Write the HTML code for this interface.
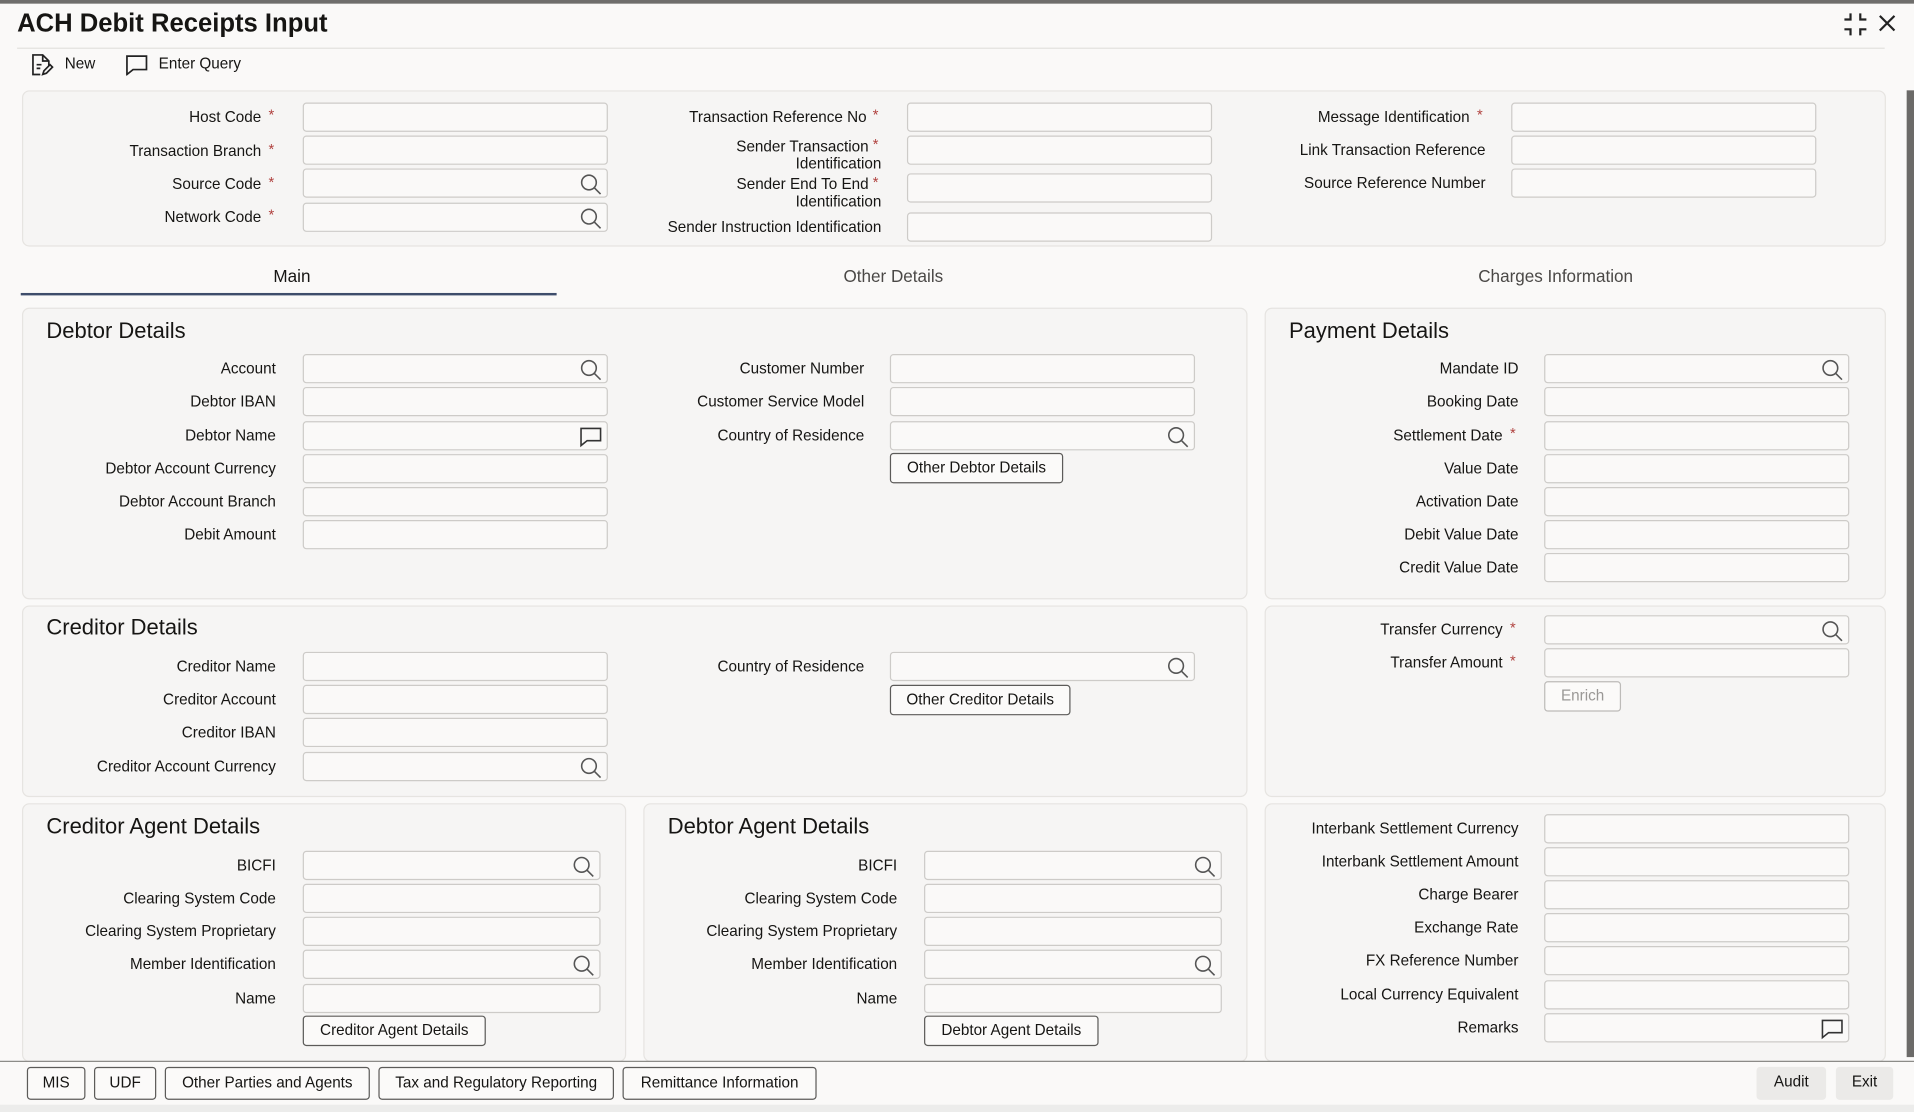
<!DOCTYPE html>
<html><head><meta charset="utf-8">
<style>
html,body{margin:0;padding:0;width:1914px;height:1112px;overflow:hidden;background:#faf9f8;}
#w{position:absolute;left:0;top:0;width:1568px;height:911px;transform:scale(1.22066);transform-origin:0 0;font-family:"Liberation Sans",sans-serif;color:#161513;font-size:12.5px;}
.p{position:absolute;background:#f6f5f4;border:1px solid #e6e4e1;border-radius:6px;}
.l{position:absolute;width:300px;text-align:right;line-height:16px;white-space:nowrap;}
.l2{position:absolute;width:300px;text-align:right;line-height:14px;}
.a{position:absolute;color:#b0413e;font-size:12px;line-height:12px;}
.i{position:absolute;height:24px;border:1px solid #cdcbc8;border-radius:3px;background:#faf9f8;box-sizing:border-box;}
.s{position:absolute;right:4px;top:3px;}
.h{position:absolute;font-size:18px;line-height:22px;}
.b{position:absolute;height:25px;border:1px solid #5c5b59;border-radius:3px;box-sizing:border-box;background:#fbfaf9;text-align:center;line-height:23px;font-size:12.5px;}
.t{position:absolute;font-size:14px;color:#4a4846;line-height:18px;}
</style></head><body><div id="w">
<div style="position:absolute;left:0;top:0;width:1568px;height:3px;background:#6f6e6c"></div>
<div style="position:absolute;left:14px;top:7px;font-size:21px;font-weight:bold;line-height:26px">ACH Debit Receipts Input</div>
<div style="position:absolute;left:14px;top:39px;width:1530px;height:1px;background:#e3e1de"></div>
<svg style="position:absolute;left:1509px;top:9px" width="22" height="22" viewBox="0 0 22 22" fill="none" stroke="#222" stroke-width="1.8"><path d="M7 2v5H2M15 2v5h5M7 20v-5H2M15 20v-5h5"/></svg>
<svg style="position:absolute;left:1539px;top:12px" width="14" height="14" viewBox="0 0 14 14" stroke="#222" stroke-width="1.8"><path d="M1 1l12 12M13 1L1 13"/></svg>
<svg style="position:absolute;left:24px;top:43px" width="20" height="20" viewBox="0 0 20 20" fill="none" stroke="#222" stroke-width="1.4"><path d="M9 18H3V2h8l5 5v4M11 2v5h5M6 10h4M6 13h3M11 18l1-3 5-5 2 2-5 5z"/></svg>
<div style="position:absolute;left:53px;top:44px;line-height:16px">New</div>
<svg style="position:absolute;left:102px;top:44px" width="20" height="18" viewBox="0 0 20 18" fill="none" stroke="#222" stroke-width="1.4"><path d="M2 2h16v11H7l-5 4z"/></svg>
<div style="position:absolute;left:130px;top:44px;line-height:16px">Enter Query</div>

<div class="p" style="left:18px;top:74px;width:1525px;height:126px"></div>
<div class="l" style="left:-86px;top:88px">Host Code</div><span class="a" style="left:220px;top:88px">*</span><div class="i" style="left:248px;top:84px;width:250px"></div>
<div class="l" style="left:-86px;top:116px">Transaction Branch</div><span class="a" style="left:220px;top:116px">*</span><div class="i" style="left:248px;top:111px;width:250px"></div>
<div class="l" style="left:-86px;top:143px">Source Code</div><span class="a" style="left:220px;top:143px">*</span><div class="i" style="left:248px;top:138px;width:250px"><svg class="s" width="18" height="18" viewBox="0 0 18 18" fill="none" stroke="#555" stroke-width="1.3"><circle cx="7.5" cy="7.5" r="6"/><path d="M12 12l5 5"/></svg></div>
<div class="l" style="left:-86px;top:170px">Network Code</div><span class="a" style="left:220px;top:170px">*</span><div class="i" style="left:248px;top:166px;width:250px"><svg class="s" width="18" height="18" viewBox="0 0 18 18" fill="none" stroke="#555" stroke-width="1.3"><circle cx="7.5" cy="7.5" r="6"/><path d="M12 12l5 5"/></svg></div>

<div class="l" style="left:410px;top:88px">Transaction Reference No</div><span class="a" style="left:715px;top:88px">*</span><div class="i" style="left:743px;top:84px;width:250px"></div>
<div class="l2" style="left:422px;top:113px">Sender Transaction&nbsp;&nbsp;&nbsp;<br>Identification</div><span class="a" style="left:715px;top:112px">*</span><div class="i" style="left:743px;top:111px;width:250px"></div>
<div class="l2" style="left:422px;top:144px">Sender End To End&nbsp;&nbsp;&nbsp;<br>Identification</div><span class="a" style="left:715px;top:143px">*</span><div class="i" style="left:743px;top:142px;width:250px"></div>
<div class="l" style="left:422px;top:178px">Sender Instruction Identification</div><div class="i" style="left:743px;top:174px;width:250px"></div>

<div class="l" style="left:904px;top:88px">Message Identification</div><span class="a" style="left:1210px;top:88px">*</span><div class="i" style="left:1238px;top:84px;width:250px"></div>
<div class="l" style="left:917px;top:115px">Link Transaction Reference</div><div class="i" style="left:1238px;top:111px;width:250px"></div>
<div class="l" style="left:917px;top:142px">Source Reference Number</div><div class="i" style="left:1238px;top:138px;width:250px"></div>

<div class="t" style="left:224px;top:217px;color:#161513">Main</div>
<div style="position:absolute;left:17px;top:240px;width:439px;height:2px;background:#3e4d6b"></div>
<div class="t" style="left:691px;top:217px">Other Details</div>
<div class="t" style="left:1211px;top:217px">Charges Information</div>

<div class="p" style="left:18px;top:252px;width:1002px;height:237px"></div>
<div class="h" style="left:38px;top:260px">Debtor Details</div>
<div class="l" style="left:-74px;top:294px">Account</div><div class="i" style="left:248px;top:290px;width:250px"><svg class="s" width="18" height="18" viewBox="0 0 18 18" fill="none" stroke="#555" stroke-width="1.3"><circle cx="7.5" cy="7.5" r="6"/><path d="M12 12l5 5"/></svg></div>
<div class="l" style="left:-74px;top:321px">Debtor IBAN</div><div class="i" style="left:248px;top:317px;width:250px"></div>
<div class="l" style="left:-74px;top:349px">Debtor Name</div><div class="i" style="left:248px;top:345px;width:250px"><svg class="s" width="18" height="18" viewBox="0 0 18 18" fill="none" stroke="#333" stroke-width="1.3"><path d="M1 2h16v10H6l-5 4z"/></svg></div>
<div class="l" style="left:-74px;top:376px">Debtor Account Currency</div><div class="i" style="left:248px;top:372px;width:250px"></div>
<div class="l" style="left:-74px;top:403px">Debtor Account Branch</div><div class="i" style="left:248px;top:399px;width:250px"></div>
<div class="l" style="left:-74px;top:430px">Debit Amount</div><div class="i" style="left:248px;top:426px;width:250px"></div>
<div class="l" style="left:408px;top:294px">Customer Number</div><div class="i" style="left:729px;top:290px;width:250px"></div>
<div class="l" style="left:408px;top:321px">Customer Service Model</div><div class="i" style="left:729px;top:317px;width:250px"></div>
<div class="l" style="left:408px;top:349px">Country of Residence</div><div class="i" style="left:729px;top:345px;width:250px"><svg class="s" width="18" height="18" viewBox="0 0 18 18" fill="none" stroke="#555" stroke-width="1.3"><circle cx="7.5" cy="7.5" r="6"/><path d="M12 12l5 5"/></svg></div>
<div class="b" style="left:729px;top:371px;width:142px">Other Debtor Details</div>

<div class="p" style="left:1036px;top:252px;width:507px;height:237px"></div>
<div class="h" style="left:1056px;top:260px">Payment Details</div>
<div class="l" style="left:944px;top:294px">Mandate ID</div><div class="i" style="left:1265px;top:290px;width:250px"><svg class="s" width="18" height="18" viewBox="0 0 18 18" fill="none" stroke="#555" stroke-width="1.3"><circle cx="7.5" cy="7.5" r="6"/><path d="M12 12l5 5"/></svg></div>
<div class="l" style="left:944px;top:321px">Booking Date</div><div class="i" style="left:1265px;top:317px;width:250px"></div>
<div class="l" style="left:931px;top:349px">Settlement Date</div><span class="a" style="left:1237px;top:349px">*</span><div class="i" style="left:1265px;top:345px;width:250px"></div>
<div class="l" style="left:944px;top:376px">Value Date</div><div class="i" style="left:1265px;top:372px;width:250px"></div>
<div class="l" style="left:944px;top:403px">Activation Date</div><div class="i" style="left:1265px;top:399px;width:250px"></div>
<div class="l" style="left:944px;top:430px">Debit Value Date</div><div class="i" style="left:1265px;top:426px;width:250px"></div>
<div class="l" style="left:944px;top:457px">Credit Value Date</div><div class="i" style="left:1265px;top:453px;width:250px"></div>

<div class="p" style="left:18px;top:496px;width:1002px;height:155px"></div>
<div class="h" style="left:38px;top:503px">Creditor Details</div>
<div class="l" style="left:-74px;top:538px">Creditor Name</div><div class="i" style="left:248px;top:534px;width:250px"></div>
<div class="l" style="left:-74px;top:565px">Creditor Account</div><div class="i" style="left:248px;top:561px;width:250px"></div>
<div class="l" style="left:-74px;top:592px">Creditor IBAN</div><div class="i" style="left:248px;top:588px;width:250px"></div>
<div class="l" style="left:-74px;top:620px">Creditor Account Currency</div><div class="i" style="left:248px;top:616px;width:250px"><svg class="s" width="18" height="18" viewBox="0 0 18 18" fill="none" stroke="#555" stroke-width="1.3"><circle cx="7.5" cy="7.5" r="6"/><path d="M12 12l5 5"/></svg></div>
<div class="l" style="left:408px;top:538px">Country of Residence</div><div class="i" style="left:729px;top:534px;width:250px"><svg class="s" width="18" height="18" viewBox="0 0 18 18" fill="none" stroke="#555" stroke-width="1.3"><circle cx="7.5" cy="7.5" r="6"/><path d="M12 12l5 5"/></svg></div>
<div class="b" style="left:729px;top:561px;width:148px">Other Creditor Details</div>

<div class="p" style="left:1036px;top:496px;width:507px;height:155px"></div>
<div class="l" style="left:931px;top:508px">Transfer Currency</div><span class="a" style="left:1237px;top:508px">*</span><div class="i" style="left:1265px;top:504px;width:250px"><svg class="s" width="18" height="18" viewBox="0 0 18 18" fill="none" stroke="#555" stroke-width="1.3"><circle cx="7.5" cy="7.5" r="6"/><path d="M12 12l5 5"/></svg></div>
<div class="l" style="left:931px;top:535px">Transfer Amount</div><span class="a" style="left:1237px;top:535px">*</span><div class="i" style="left:1265px;top:531px;width:250px"></div>
<div class="b" style="left:1265px;top:558px;width:63px;border-color:#bdbbb8;color:#9a9896">Enrich</div>

<div class="p" style="left:18px;top:658px;width:493px;height:210px"></div>
<div class="h" style="left:38px;top:666px">Creditor Agent Details</div>
<div class="l" style="left:-74px;top:701px">BICFI</div><div class="i" style="left:248px;top:697px;width:244px"><svg class="s" width="18" height="18" viewBox="0 0 18 18" fill="none" stroke="#555" stroke-width="1.3"><circle cx="7.5" cy="7.5" r="6"/><path d="M12 12l5 5"/></svg></div>
<div class="l" style="left:-74px;top:728px">Clearing System Code</div><div class="i" style="left:248px;top:724px;width:244px"></div>
<div class="l" style="left:-74px;top:755px">Clearing System Proprietary</div><div class="i" style="left:248px;top:751px;width:244px"></div>
<div class="l" style="left:-74px;top:782px">Member Identification</div><div class="i" style="left:248px;top:778px;width:244px"><svg class="s" width="18" height="18" viewBox="0 0 18 18" fill="none" stroke="#555" stroke-width="1.3"><circle cx="7.5" cy="7.5" r="6"/><path d="M12 12l5 5"/></svg></div>
<div class="l" style="left:-74px;top:810px">Name</div><div class="i" style="left:248px;top:806px;width:244px"></div>
<div class="b" style="left:248px;top:832px;width:150px">Creditor Agent Details</div>

<div class="p" style="left:527px;top:658px;width:493px;height:210px"></div>
<div class="h" style="left:547px;top:666px">Debtor Agent Details</div>
<div class="l" style="left:435px;top:701px">BICFI</div><div class="i" style="left:757px;top:697px;width:244px"><svg class="s" width="18" height="18" viewBox="0 0 18 18" fill="none" stroke="#555" stroke-width="1.3"><circle cx="7.5" cy="7.5" r="6"/><path d="M12 12l5 5"/></svg></div>
<div class="l" style="left:435px;top:728px">Clearing System Code</div><div class="i" style="left:757px;top:724px;width:244px"></div>
<div class="l" style="left:435px;top:755px">Clearing System Proprietary</div><div class="i" style="left:757px;top:751px;width:244px"></div>
<div class="l" style="left:435px;top:782px">Member Identification</div><div class="i" style="left:757px;top:778px;width:244px"><svg class="s" width="18" height="18" viewBox="0 0 18 18" fill="none" stroke="#555" stroke-width="1.3"><circle cx="7.5" cy="7.5" r="6"/><path d="M12 12l5 5"/></svg></div>
<div class="l" style="left:435px;top:810px">Name</div><div class="i" style="left:757px;top:806px;width:244px"></div>
<div class="b" style="left:757px;top:832px;width:143px">Debtor Agent Details</div>

<div class="p" style="left:1036px;top:658px;width:507px;height:210px"></div>
<div class="l" style="left:944px;top:671px">Interbank Settlement Currency</div><div class="i" style="left:1265px;top:667px;width:250px"></div>
<div class="l" style="left:944px;top:698px">Interbank Settlement Amount</div><div class="i" style="left:1265px;top:694px;width:250px"></div>
<div class="l" style="left:944px;top:725px">Charge Bearer</div><div class="i" style="left:1265px;top:721px;width:250px"></div>
<div class="l" style="left:944px;top:752px">Exchange Rate</div><div class="i" style="left:1265px;top:748px;width:250px"></div>
<div class="l" style="left:944px;top:779px">FX Reference Number</div><div class="i" style="left:1265px;top:775px;width:250px"></div>
<div class="l" style="left:944px;top:807px">Local Currency Equivalent</div><div class="i" style="left:1265px;top:803px;width:250px"></div>
<div class="l" style="left:944px;top:834px">Remarks</div><div class="i" style="left:1265px;top:830px;width:250px"><svg class="s" width="18" height="18" viewBox="0 0 18 18" fill="none" stroke="#333" stroke-width="1.3"><path d="M1 2h16v10H6l-5 4z"/></svg></div>

<div style="position:absolute;left:1562px;top:74px;width:6px;height:792px;background:#6b6a68"></div>
<div style="position:absolute;left:0;top:869px;width:1568px;height:1px;background:#8a8986"></div>
<div class="b" style="left:22px;top:874px;width:48px;height:27px;line-height:25px">MIS</div>
<div class="b" style="left:77px;top:874px;width:51px;height:27px;line-height:25px">UDF</div>
<div class="b" style="left:135px;top:874px;width:168px;height:27px;line-height:25px">Other Parties and Agents</div>
<div class="b" style="left:310px;top:874px;width:193px;height:27px;line-height:25px">Tax and Regulatory Reporting</div>
<div class="b" style="left:510px;top:874px;width:159px;height:27px;line-height:25px">Remittance Information</div>
<div class="b" style="left:1439px;top:874px;width:57px;height:27px;line-height:25px;border:none;background:#ebeae8">Audit</div>
<div class="b" style="left:1504px;top:874px;width:47px;height:27px;line-height:25px;border:none;background:#ebeae8">Exit</div>
<div style="position:absolute;left:0;top:905px;width:1568px;height:6px;background:#ececeb"></div>
</div></body></html>
